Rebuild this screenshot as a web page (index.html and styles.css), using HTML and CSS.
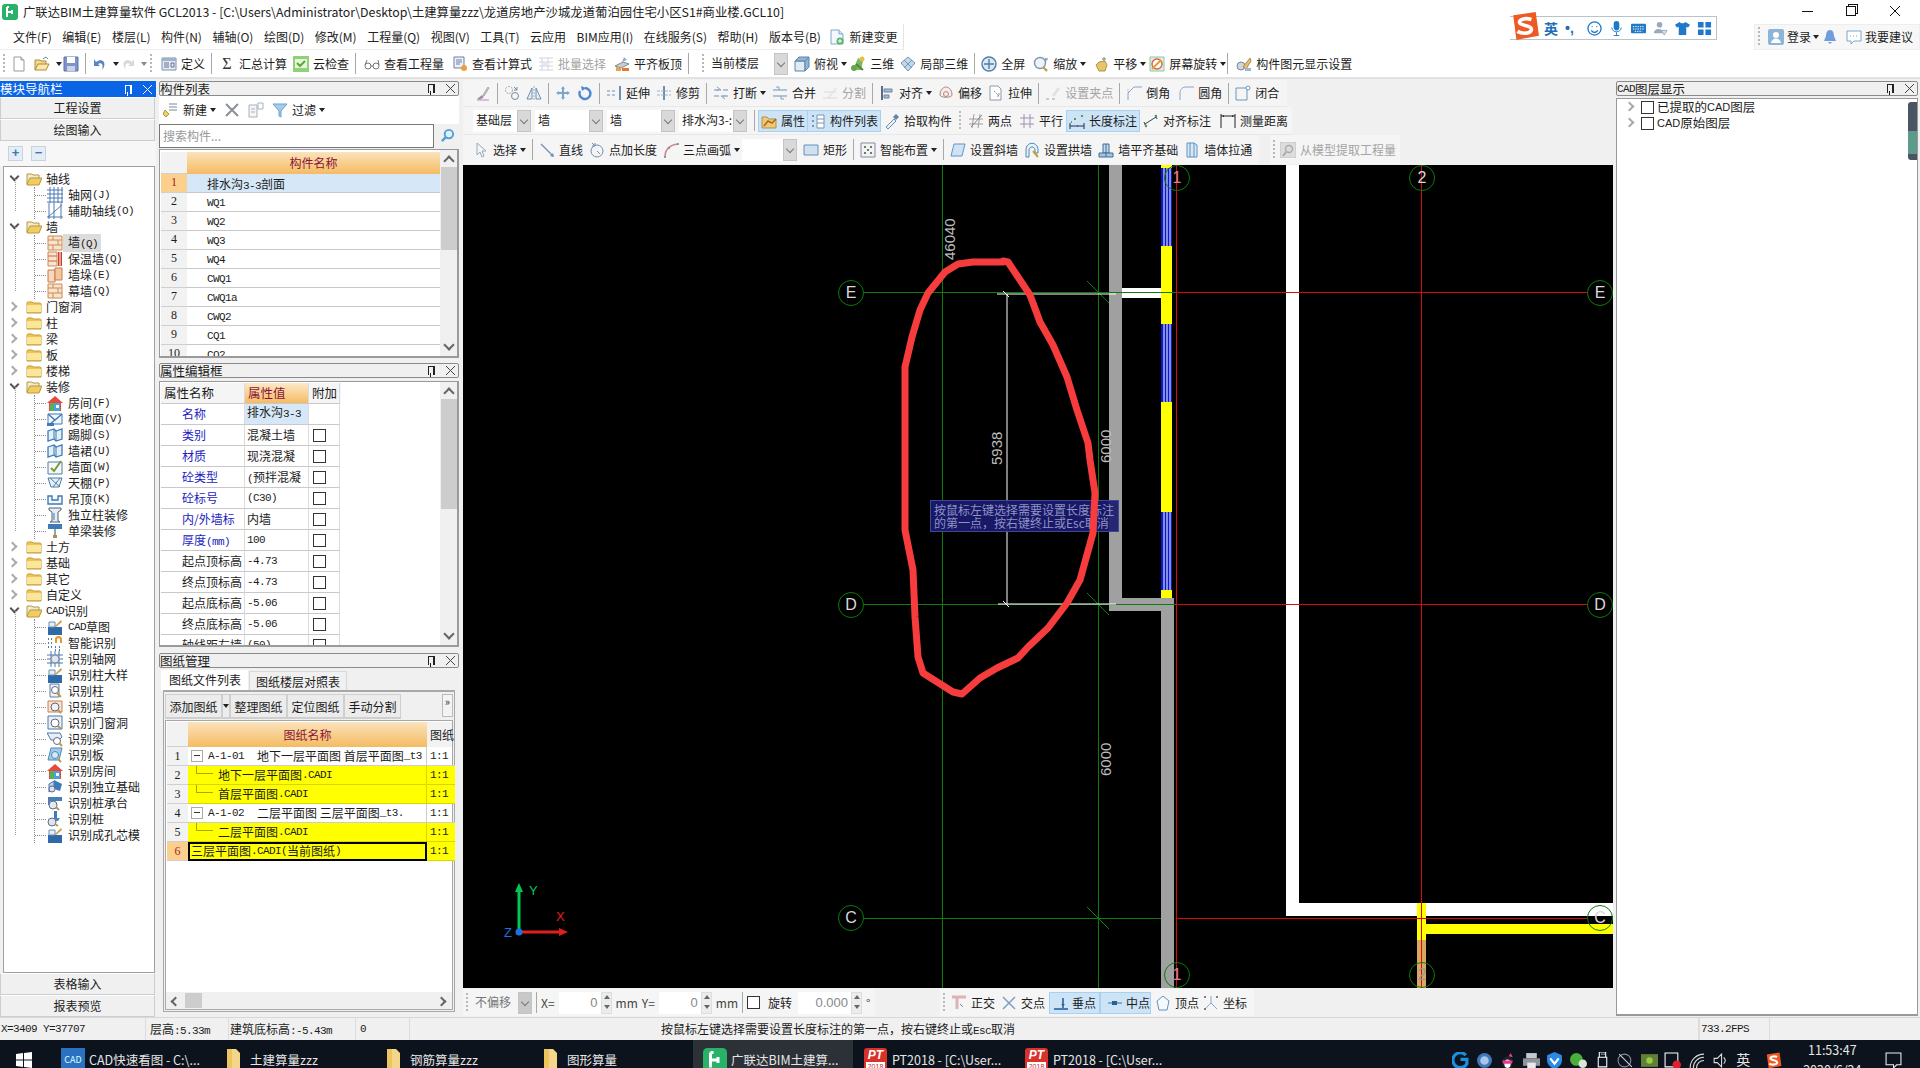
FILE: index.html
```html
<!DOCTYPE html>
<html lang="zh"><head><meta charset="utf-8"><title>GCL2013</title><link rel="stylesheet" href="styles.css"></head>
<body>
<svg class="defs" width="0" height="0">
<symbol id="doc" viewBox="0 0 16 16"><path d="M3 1h7l3 3v11H3z" fill="#fff" stroke="#999"/><path d="M10 1v3h3" fill="#ddd" stroke="#999"/></symbol>
<symbol id="open" viewBox="0 0 16 16"><path d="M1 14V4h5l1 1h5v3" fill="#f3d98a" stroke="#b08a3a"/><path d="M1 14l3-6h11l-3 6z" fill="#fbe9a8" stroke="#b08a3a"/><path d="M9 3l3-2 2 2" fill="none" stroke="#68a"/></symbol>
<symbol id="save" viewBox="0 0 16 16"><path d="M1 1h14v14H1z" fill="#7d93c9" stroke="#5d72a8"/><path d="M4 1h8v6H4z" fill="#fff"/><path d="M4 10h8v5H4z" fill="#c9d2e6"/></symbol>
<symbol id="undo" viewBox="0 0 16 16"><path d="M4 6c5-4 10-1 8 5l-2 3c2-6-1-8-4-6l2 2H2V3z" fill="#5b84c4"/></symbol>
<symbol id="redo" viewBox="0 0 16 16"><path d="M12 6C7 2 2 5 4 11l2 3C4 8 7 6 10 8L8 10h6V3z" fill="#d5d8dc"/></symbol>
<symbol id="define" viewBox="0 0 16 16"><path d="M1 2h14v12H1z" fill="#e4ebf5" stroke="#7d8ea8"/><path d="M1 2h14v3H1z" fill="#9fb2cd"/><path d="M3 7h5M3 9h5M3 11h5M10 7h3v4h-3z" fill="none" stroke="#60738f"/></symbol>
<symbol id="cloud" viewBox="0 0 16 16"><path d="M0 0h16v16H0z" fill="#8fd07a"/><path d="M2 3h12v9H2z" fill="#e8f6d8"/><path d="M4 7l3 3 5-5" fill="none" stroke="#58a83c" stroke-width="2"/></symbol>
<symbol id="glasses" viewBox="0 0 16 16"><circle cx="4" cy="10" r="3" fill="none" stroke="#777"/><circle cx="12" cy="10" r="3" fill="none" stroke="#777"/><path d="M7 10h2M1 9l2-5M15 9l-1-5" stroke="#777" fill="none"/></symbol>
<symbol id="calc" viewBox="0 0 16 16"><path d="M2 1h10v11H2z" fill="#eef2f8" stroke="#6a7fa8"/><path d="M4 4h6M4 6h6M4 8h4" stroke="#6a7fa8"/><circle cx="12" cy="12" r="3" fill="#e8a040"/></symbol>
<symbol id="newdoc" viewBox="0 0 16 16"><path d="M2 1h8l4 4v10H2z" fill="#f4f8fc" stroke="#7fa6cc"/><path d="M10 1v4h4" fill="#d6e6f4" stroke="#7fa6cc"/><circle cx="11" cy="12" r="3.500" fill="#58b868"/><path d="M11 10v4M9 12h4" stroke="#fff"/></symbol>
<symbol id="batch" viewBox="0 0 16 16"><path d="M1 2h14M1 6h14M1 10h14M1 14h14M4 2v12M10 2v12" stroke="#d0d4da" fill="none"/><path d="M4 6h6v4H4z" fill="#e4e8ee"/></symbol>
<symbol id="flush" viewBox="0 0 16 16"><path d="M1 10l8-4 6 2-8 4z" fill="#c9cdd3" stroke="#888"/><path d="M8 12h7v3H8z" fill="#e47a2e"/><path d="M2 11v4h5v-3z" fill="#eaa050"/><path d="M10 1l3 3-5 2z" fill="#8bb0d8"/></symbol>
<symbol id="topv" viewBox="0 0 16 16"><path d="M1 5h10v10H1z" fill="#e2ebf4" stroke="#5b84a8"/><path d="M1 5l4-4h10l-4 4zM11 5l4-4v10l-4 4z" fill="#8fb6d8" stroke="#5b84a8"/></symbol>
<symbol id="v3d" viewBox="0 0 16 16"><path d="M3 14l5-12 5 3-2 9z" fill="#7cb860"/><circle cx="12" cy="3" r="2.500" fill="#e8c040"/><circle cx="4" cy="12" r="3" fill="#6aa64e"/><path d="M6 8l7 6" stroke="#4d8a38" stroke-width="2"/></symbol>
<symbol id="loc3d" viewBox="0 0 16 16"><path d="M8 1l7 6-7 8-7-8z" fill="#c5d8ea" stroke="#7594b2"/><path d="M4 4l8 8M12 4l-8 8" stroke="#7594b2"/></symbol>
<symbol id="full" viewBox="0 0 16 16"><circle cx="8" cy="8" r="7" fill="#dce8f4" stroke="#4f7cac" stroke-width="1.400"/><path d="M8 3v10M3 8h10" stroke="#4f7cac" stroke-width="1.400"/></symbol>
<symbol id="zoom" viewBox="0 0 16 16"><circle cx="7" cy="7" r="5.500" fill="#eef3f8" stroke="#7b95b2" stroke-width="1.400"/><path d="M10 11l4 4" stroke="#c0a14a" stroke-width="2.400"/><path d="M13 2v3M12 3h3" stroke="#789"/></symbol>
<symbol id="pan" viewBox="0 0 16 16"><path d="M3 9l3-3 6-1 2 4-2 6H6z" fill="#e6c36c" stroke="#b3924a"/><path d="M11 1v4M9 3h4" stroke="#789"/></symbol>
<symbol id="rot" viewBox="0 0 16 16"><path d="M1 1h14v14H1z" fill="#dff0dc" stroke="#8cc7a0"/><circle cx="8" cy="8" r="5" fill="#fff" stroke="#e15a5a" stroke-width="1.400"/><path d="M3 13l9-9" stroke="#e0a030" stroke-width="2"/></symbol>
<symbol id="disp" viewBox="0 0 16 16"><circle cx="5" cy="10" r="4" fill="#cfd6dd" stroke="#7a8794"/><path d="M7 11l7-9 1 3-5 8z" fill="#e4c272" stroke="#a98c46"/><path d="M9 12h6v3H9z" fill="#9db8d2"/></symbol>
<symbol id="brush" viewBox="0 0 16 16"><path d="M2 14l5-4 2 2-4 3z" fill="#9a8fa8"/><path d="M8 10l5-8 1 1-5 8z" fill="#c5ccd4" stroke="#aaa"/><path d="M2 15h12" stroke="#d0a8c8" stroke-width="1.500"/></symbol>
<symbol id="copyc" viewBox="0 0 16 16"><circle cx="5" cy="5" r="3.500" fill="none" stroke="#9aa" stroke-dasharray="2 1"/><circle cx="11" cy="11" r="3.500" fill="none" stroke="#789"/><path d="M10 2l3 3M13 2v3h-3" stroke="#789" fill="none"/></symbol>
<symbol id="mirror" viewBox="0 0 16 16"><path d="M8 1v14" stroke="#9ab" stroke-dasharray="2 1"/><path d="M6 3v11H1zM10 3v11h5z" fill="#e8eef5" stroke="#6f8fb0"/></symbol>
<symbol id="move" viewBox="0 0 16 16"><path d="M8 1l2 3H9v3h3V6l3 2-3 2V9H9v3h1l-2 3-2-3h1V9H4v1L1 8l3-2v1h3V4H6z" fill="#7ea4cc"/></symbol>
<symbol id="rotate" viewBox="0 0 16 16"><path d="M8 3a5.500 5.500 0 1 1-5 3" fill="none" stroke="#4f8ad0" stroke-width="2.500"/><path d="M4 1l5 2-4 3z" fill="#4f8ad0"/></symbol>
<symbol id="extend" viewBox="0 0 16 16"><path d="M14 1v14" stroke="#6f8fb0" stroke-width="2"/><path d="M1 6h3M6 6h3M1 10h3M6 10h3" stroke="#6f8fb0"/></symbol>
<symbol id="trim" viewBox="0 0 16 16"><path d="M8 1v14" stroke="#6f8fb0" stroke-width="2"/><path d="M1 6h14M1 10h14" stroke="#9eb5cc" stroke-dasharray="3 1"/></symbol>
<symbol id="brk" viewBox="0 0 16 16"><path d="M1 5h5M10 5h5M1 11h5M10 11h5" stroke="#6f8fb0"/><path d="M4 2l4 3-4 0M12 14l-4-3 4 0" stroke="#7fa1c4" fill="none"/></symbol>
<symbol id="mrg" viewBox="0 0 16 16"><path d="M1 5h14M1 11h14" stroke="#6f8fb0"/><path d="M4 2h3v3M12 14H9v-3" stroke="#7fa1c4" fill="none"/></symbol>
<symbol id="spl" viewBox="0 0 16 16"><path d="M1 13h14M2 7h12" stroke="#d5d8dc"/><path d="M4 14L13 3l2 1-9 10z" fill="#e3e5e8"/></symbol>
<symbol id="alg" viewBox="0 0 16 16"><path d="M3 1v14" stroke="#596e86" stroke-width="2"/><path d="M5 4h8v3H5zM5 10h5v3H5z" fill="#a9bed3" stroke="#6a84a0"/></symbol>
<symbol id="ofs" viewBox="0 0 16 16"><path d="M2 10c0-6 4-8 6-8s6 2 6 8c0 3-12 3-12 0z" fill="#fbeae8" stroke="#aa8a8a"/><circle cx="8" cy="9" r="2.500" fill="none" stroke="#aa8a8a"/></symbol>
<symbol id="str" viewBox="0 0 16 16"><path d="M2 1h8l3 3v11H2z" fill="#fff" stroke="#8a98a8"/><path d="M6 6l5 5M11 8v3H8" stroke="#8a98a8" fill="none" stroke-dasharray="2 1"/></symbol>
<symbol id="grp" viewBox="0 0 16 16"><path d="M7 10l6-8 2 2-6 8z" fill="#dfe2e6"/><path d="M1 14h3M7 14h3" stroke="#ccc" stroke-width="2"/></symbol>
<symbol id="chf" viewBox="0 0 16 16"><path d="M2 15V8l6-6h8" fill="none" stroke="#86a6c6"/><path d="M2 4v3" stroke="#86a6c6" stroke-dasharray="1 1"/></symbol>
<symbol id="fil" viewBox="0 0 16 16"><path d="M2 15V8c0-4 3-6 6-6h8" fill="none" stroke="#86a6c6"/></symbol>
<symbol id="cls" viewBox="0 0 16 16"><path d="M1 3h11v12H1z" fill="none" stroke="#6f96bc"/><circle cx="13" cy="3" r="2" fill="#fff" stroke="#6f96bc"/></symbol>
<symbol id="attr" viewBox="0 0 16 16"><path d="M1 4h5l2 2h7v9H1z" fill="#eec877" stroke="#b3904a"/><path d="M3 13l4-5 4 2 4-4" fill="none" stroke="#a86a20" stroke-width="1.500"/></symbol>
<symbol id="lst" viewBox="0 0 16 16"><path d="M2 2h2v2H2zM2 7h2v2H2zM2 12h2v2H2z" fill="#7b96b3"/><path d="M7 2h7v13H7z" fill="#fff" stroke="#7b96b3"/><path d="M7 6h7M7 10h7" stroke="#7b96b3"/></symbol>
<symbol id="pick" viewBox="0 0 16 16"><path d="M2 14l8-8 2 2-8 8z" fill="#e9f1f8" stroke="#6d90b2"/><path d="M9 4l3-3 3 3-3 3z" fill="#5d85aa"/></symbol>
<symbol id="two" viewBox="0 0 16 16"><path d="M1 11h14M1 6h14M4 15L6 1M10 15l2-14" stroke="#a99" fill="none"/><path d="M3 14L14 2" stroke="#789"/></symbol>
<symbol id="par" viewBox="0 0 16 16"><path d="M1 5h14M1 11h14M5 1v14M11 1v14" stroke="#a08fb0" fill="none"/></symbol>
<symbol id="lend" viewBox="0 0 16 16"><path d="M1 13h14M1 10v6M15 10v6" stroke="#234" fill="none"/><path d="M5 5h2v2H5zM12 2h2v2h-2z" fill="#5a9a4c"/><path d="M2 9h1M8 13h1" stroke="#234"/></symbol>
<symbol id="algd" viewBox="0 0 16 16"><path d="M2 11L13 4M1 9l2 5M12 2l2 4" stroke="#345" fill="none"/><circle cx="3" cy="13" r="1.200" fill="#5a9a4c"/><circle cx="13" cy="3" r="1.200" fill="#5a9a4c"/></symbol>
<symbol id="meas" viewBox="0 0 16 16"><path d="M1 1v14M15 1v14M1 3h14" stroke="#222" fill="none"/><path d="M2 3l2-1v2zM14 3l-2-1v2z" fill="#222"/></symbol>
<symbol id="sel" viewBox="0 0 16 16"><path d="M4 1v12l3-3 2 5 2-1-2-5h4z" fill="#f4f6f8" stroke="#9aa8b6"/></symbol>
<symbol id="lin" viewBox="0 0 16 16"><path d="M2 2l12 12" stroke="#6f8fb0" stroke-width="1.200"/><path d="M15 15l-4-1 3-3z" fill="#6f8fb0"/></symbol>
<symbol id="ptl" viewBox="0 0 16 16"><circle cx="8" cy="9" r="6" fill="none" stroke="#6f8fb0"/><path d="M3 1l3 3M6 1v3H3M8 9l3 3" stroke="#6f8fb0" fill="none"/></symbol>
<symbol id="arc" viewBox="0 0 16 16"><path d="M2 15C2 7 7 3 15 2" fill="none" stroke="#c88" stroke-width="1.500"/><circle cx="2" cy="15" r="1" fill="#789"/><circle cx="6" cy="6" r="1" fill="#789"/><circle cx="15" cy="2" r="1" fill="#789"/></symbol>
<symbol id="rct" viewBox="0 0 16 16"><path d="M1 3h14v10H1z" fill="#cfe0f2" stroke="#6a8fb8"/></symbol>
<symbol id="smt" viewBox="0 0 16 16"><path d="M1 1h14v14H1z" fill="#f0f2f5" stroke="#889"/><path d="M4 4h2v2H4zM10 4h2v2h-2zM7 7h2v2H7zM4 10h2v2H4zM10 10h2v2h-2z" fill="#6a7f5a"/></symbol>
<symbol id="sla" viewBox="0 0 16 16"><path d="M4 2h11l-3 12H1z" fill="#cfe3f5" stroke="#5c96cc"/></symbol>
<symbol id="ach" viewBox="0 0 16 16"><path d="M2 8c0-9 12-9 12 0v3h-3V8c0-4-6-4-6 0v7H2z" fill="#e8f2f8" stroke="#4e88b6"/><path d="M9 9l5 6" stroke="#c0a040" stroke-width="2"/></symbol>
<symbol id="wfl" viewBox="0 0 16 16"><path d="M5 2h6v9H5z" fill="#c9d9ea" stroke="#3d6c9c"/><path d="M1 11h14v4H1z" fill="#a8c3dd" stroke="#3d6c9c"/><path d="M8 2v13" stroke="#3d6c9c"/></symbol>
<symbol id="wth" viewBox="0 0 16 16"><path d="M3 1h7l3 2v12H3z" fill="#d8e8f5" stroke="#5f94c2"/><path d="M6 1v14M10 1v14" stroke="#5f94c2"/></symbol>
<symbol id="ext" viewBox="0 0 16 16"><path d="M0 0h16v16H0z" fill="#dcdcdc" stroke="#c4c4c4"/><circle cx="9" cy="7" r="3.500" fill="none" stroke="#aaa" stroke-width="1.400"/><path d="M6 10l-3 4" stroke="#aaa" stroke-width="2"/></symbol>
<symbol id="ort" viewBox="0 0 16 16"><path d="M1 2h14M6 2v12" stroke="#dcb4b4" stroke-width="3"/><path d="M9 9l3 3" stroke="#789"/></symbol>
<symbol id="ins" viewBox="0 0 16 16"><path d="M2 2l12 12M14 2L2 14" stroke="#7da0c4" stroke-width="1.500"/></symbol>
<symbol id="prp" viewBox="0 0 16 16"><path d="M1 14h14" stroke="#2a5f9e" stroke-width="1.600"/><path d="M10 3v10" stroke="#2a5f9e" stroke-width="1.600"/><path d="M10 11l-2-2h4z" fill="#2a5f9e"/></symbol>
<symbol id="mid" viewBox="0 0 16 16"><path d="M1 8h14" stroke="#3a6ea5"/><path d="M5 6h5v4H5z" fill="#2a5f9e"/></symbol>
<symbol id="vtx" viewBox="0 0 16 16"><path d="M8 1l6 5-2 9H4L2 6z" fill="#f6fafd" stroke="#5e93c2"/></symbol>
<symbol id="coo" viewBox="0 0 16 16"><path d="M8 8V1M8 8l6 6M8 8l-6 6" stroke="#85a8c9" fill="none"/><circle cx="2" cy="2" r="1" fill="#556"/><circle cx="14" cy="2" r="1" fill="#556"/><circle cx="2" cy="14" r="1" fill="#556"/></symbol>
<symbol id="newb" viewBox="0 0 16 16"><path d="M6 2h8M6 5h8M6 8h8" stroke="#7a8797"/><path d="M2 8l4 4-3 3-3-3z" fill="#e8d068" stroke="#b09a38"/></symbol>
<symbol id="del" viewBox="0 0 16 16"><path d="M2 2l12 12M14 2L2 14" stroke="#8a8f96" stroke-width="2"/></symbol>
<symbol id="copyb" viewBox="0 0 16 16"><path d="M1 3h8v12H1z" fill="#f3f5f7" stroke="#a7b1ba"/><path d="M10 1h5v6h-5z" fill="#fff" stroke="#a7b1ba"/><path d="M3 7h4M3 10h4" stroke="#a7b1ba"/></symbol>
<symbol id="filter" viewBox="0 0 16 16"><path d="M1 2h14L9 9v6l-2-1V9z" fill="#a5cceb" stroke="#6aa2cc"/></symbol>
<symbol id="fold" viewBox="0 0 16 16"><path d="M1 4c0-1 1-1 1-1h4l1 1h7c1 0 1 1 1 1v9H1z" fill="#f3c64a" stroke="#c09a3a"/><path d="M1 6h14v7H1z" fill="#fbe79c"/></symbol>
<symbol id="foldo" viewBox="0 0 16 16"><path d="M1 13V3h5l1 1h6v3" fill="#f5eac7" stroke="#b59648"/><path d="M1 13l3-6h12l-3 7H1z" fill="#f3cc5e" stroke="#b59648"/></symbol>
<symbol id="tgrid" viewBox="0 0 16 16"><path d="M0 3h16M0 7h16M0 11h16M0 15h16M3 0v16M7 0v16M11 0v16M15 0v16" stroke="#4b78b4"/></symbol>
<symbol id="taux" viewBox="0 0 16 16"><path d="M0 14h16M2 0v16M7 0v16M14 0v16" stroke="#4b78b4"/><path d="M1 14L15 2" stroke="#4b78b4"/></symbol>
<symbol id="twall" viewBox="0 0 16 16"><path d="M1 1h14v14H1z" fill="#f8e3cf" stroke="#cd8a55"/><path d="M1 5h14M1 10h14M6 1v4M11 5v5M6 10v5" stroke="#cd8a55"/></symbol>
<symbol id="tins" viewBox="0 0 16 16"><path d="M1 1h9v14H1z" fill="#f8e3cf" stroke="#cd8a55"/><path d="M1 5h9M1 10h9" stroke="#c86a3a"/><path d="M11 1h4v14h-4z" fill="#c9402a"/><path d="M13 1v14" stroke="#fff"/></symbol>
<symbol id="tpier" viewBox="0 0 16 16"><path d="M1 3h7v12H1z" fill="#f7d8bc" stroke="#c87a45"/><path d="M8 1h7v12H8z" fill="#f3c79c" stroke="#c87a45"/></symbol>
<symbol id="troom" viewBox="0 0 16 16"><path d="M8 1L0 8h2v8h12V8h2z" fill="#e9473b"/><path d="M3 8h10v8H3z" fill="#48a2e0"/><path d="M3 8h4v8H3z" fill="#58b158"/><path d="M9 10h3v3H9z" fill="#fff"/></symbol>
<symbol id="tfloor" viewBox="0 0 16 16"><path d="M1 3h14v10H1z" fill="#f3f7fb" stroke="#3e79b8"/><path d="M1 3l7 6 7-6M3 13l5-4" fill="none" stroke="#3e79b8" stroke-width="1.400"/><path d="M0 12h7v3H0z" fill="#3e79b8"/></symbol>
<symbol id="tbase" viewBox="0 0 16 16"><path d="M1 4l6-2 2 2 6-2v10l-6 2-2-2-6 2z" fill="#e3eff9" stroke="#3e79b8" stroke-width="1.300"/><path d="M7 2v10M9 4v10" stroke="#3e79b8"/></symbol>
<symbol id="tface" viewBox="0 0 16 16"><path d="M1 3h14v12H1z" fill="#f5f8fb" stroke="#4f7ca6"/><path d="M4 9l3 3 7-10" stroke="#7a9a3a" stroke-width="2" fill="none"/></symbol>
<symbol id="tceil" viewBox="0 0 16 16"><path d="M1 3h14l-3 9H4z" fill="#e6f0f9" stroke="#4f7ca6"/><path d="M3 3l10 9M13 3L6 12" stroke="#4f7ca6"/></symbol>
<symbol id="tsus" viewBox="0 0 16 16"><path d="M1 5v8h14V5h-4v4H5V5z" fill="#f3f7fb" stroke="#3e79b8" stroke-width="1.400"/></symbol>
<symbol id="tcol" viewBox="0 0 16 16"><path d="M2 1h12v2l-3 2v9l2 1H3l2-1V5L2 3z" fill="#e7edf3" stroke="#4f6578"/><path d="M7 6v7" stroke="#3e79b8"/></symbol>
<symbol id="tbeam" viewBox="0 0 16 16"><path d="M1 1h14v5H1z" fill="#3e79b8"/><path d="M7 6h2v6H7z" fill="#8aa"/><path d="M6 12h4v3H6z" fill="#b58a50"/></symbol>
<symbol id="tcad" viewBox="0 0 16 16"><path d="M1 8h14v8H1z" fill="#2f6aa8"/><path d="M8 7l6-6 1 2-6 5z" fill="#cfa04a"/><path d="M2 3h6v5H2z" fill="#e6edf4" stroke="#6a8fb2"/></symbol>
<symbol id="tsm" viewBox="0 0 16 16"><path d="M1 4h1M4 4h1M1 8h1M4 8h1M1 12h1M4 12h1M8 12h1M12 12h1M8 15h1M12 15h1" stroke="#4f7ca6" stroke-width="2"/><path d="M8 8V4c0-4 7-4 7 0v4h-2V4c0-1-3-1-3 0v4z" fill="#e8962a"/></symbol>
<symbol id="tgg" viewBox="0 0 16 16"><path d="M0 4h16M0 8h16M0 12h16M4 0v16M8 0v16M12 0v16" stroke="#4b78b4"/><circle cx="8" cy="8" r="4" fill="#dfe8f0" stroke="#889"/></symbol>
<symbol id="tr1" viewBox="0 0 16 16"><path d="M3 1h9v13H3z" fill="#eef3f8" stroke="#5d7ea0"/><circle cx="8" cy="7" r="3.500" fill="#fff" stroke="#668"/><path d="M10 10l4 4" stroke="#b89a4a" stroke-width="2"/></symbol>
<symbol id="tr2" viewBox="0 0 16 16"><path d="M1 2h14v11H1z" fill="#f7e4d0" stroke="#c8824c"/><circle cx="8" cy="8" r="4" fill="#eef3f8" stroke="#668"/><path d="M11 11l3 3" stroke="#b89a4a" stroke-width="2"/></symbol>
<symbol id="tr3" viewBox="0 0 16 16"><path d="M1 1h14v13H1z" fill="#eaf1f8" stroke="#4a78a8"/><circle cx="8" cy="8" r="4" fill="#fff" stroke="#668"/><path d="M11 11l3 3" stroke="#b89a4a" stroke-width="2"/></symbol>
<symbol id="tr4" viewBox="0 0 16 16"><path d="M0 2h13l2 4-3 3H4z" fill="#e6eef6" stroke="#4a78a8"/><circle cx="10" cy="10" r="3.500" fill="#fff" stroke="#668"/><path d="M12 12l3 3" stroke="#b89a4a" stroke-width="2"/></symbol>
<symbol id="tr5" viewBox="0 0 16 16"><path d="M4 1h11l-3 12H1z" fill="#a6cbe8" stroke="#4a88b8"/><circle cx="8" cy="8" r="3.500" fill="#d4eaf6" stroke="#4a88b8"/><path d="M11 12l3 3" stroke="#b89a4a" stroke-width="2"/></symbol>
<symbol id="tr6" viewBox="0 0 16 16"><path d="M7 1l8 4-2 7-6-2z" fill="#3e79b8"/><path d="M2 5l5-3v8l-5 3z" fill="#b7d1e8" stroke="#3e79b8"/><circle cx="5" cy="10" r="3" fill="#d8e2ec" stroke="#668"/></symbol>
<symbol id="tr7" viewBox="0 0 16 16"><path d="M1 2h14v4H3v4H1z" fill="#4a7fb5"/><circle cx="6" cy="10" r="4" fill="#e1e9f1" stroke="#668"/><path d="M9 12l3 3" stroke="#b89a4a" stroke-width="2"/></symbol>
<symbol id="tr8" viewBox="0 0 16 16"><path d="M7 0h3v8H7z" fill="#3e79b8"/><path d="M4 7h9l-2 3H6z" fill="#4a88c0"/><circle cx="5" cy="11" r="4" fill="#dbe5ee" stroke="#668"/><path d="M8 13l3 2" stroke="#b89a4a" stroke-width="2"/></symbol>
<symbol id="glodon" viewBox="0 0 16 16"><rect width="16" height="16" rx="3" fill="#27b268"/><path d="M5 3v10M5 8h6M5 3h2M10 6v4" stroke="#fff" stroke-width="2" fill="none"/></symbol>
<symbol id="user" viewBox="0 0 16 16"><rect width="16" height="16" rx="2" fill="#8cb5d8"/><circle cx="8" cy="6" r="3" fill="#fff"/><path d="M3 14c1-6 9-6 10 0z" fill="#fff"/></symbol>
<symbol id="bell" viewBox="0 0 16 16"><path d="M8 1c3 0 4 3 4 6l2 5H2l2-5c0-3 1-6 4-6z" fill="#6f9edb"/><path d="M6 13h4l-2 2z" fill="#6f9edb"/></symbol>
<symbol id="chat" viewBox="0 0 16 16"><path d="M1 2h14v10H8l-3 3v-3H1z" fill="#fff" stroke="#7ea6cc"/><path d="M4 7h1M7 7h1M10 7h1" stroke="#7ea6cc"/></symbol>
<symbol id="sogou" viewBox="0 0 28 28"><path d="M3 4l21-3 3 22-21 4z" fill="#ef5a24"/><path d="M20 8C14 6 8 8 9 11s11 2 11 6-8 5-13 2" fill="none" stroke="#fff" stroke-width="3.400"/></symbol>
<symbol id="tfolder" viewBox="0 0 16 24"><path d="M2 1h9l4 4v19H2z" fill="#f4d68a"/><path d="M2 1h5v23H2z" fill="#eec45e"/></symbol>
</svg>

<div class="app">
  <header class="titlebar">
    <svg class="logo"><use href="#glodon"/></svg>
    <span class="ttl">广联达BIM土建算量软件 GCL2013 - [C:\Users\Administrator\Desktop\土建算量zzz\龙道房地产沙城龙道葡泊园住宅小区S1#商业楼.GCL10]</span>
    <div class="win">
      <span class="wmin"></span><span class="wres"></span>
      <svg class="wx" viewBox="0 0 12 12"><path d="M1 1l10 10M11 1L1 11" stroke="#111" fill="none"/></svg>
    </div>
  </header>

  <nav class="menubar">
    <div class="menus">
      <span>文件(F)</span><span>编辑(E)</span><span>楼层(L)</span><span>构件(N)</span><span>辅轴(O)</span><span>绘图(D)</span><span>修改(M)</span><span>工程量(Q)</span><span>视图(V)</span><span>工具(T)</span><span>云应用</span><span>BIM应用(I)</span><span>在线服务(S)</span><span>帮助(H)</span><span>版本号(B)</span>
      <span class="it nb"><svg class="ic"><use href="#newdoc"/></svg>新建变更</span>
    </div>
    <div class="login">
      <i class="grip"></i>
      <svg class="ic"><use href="#user"/></svg><span>登录</span><i class="ar"></i>
      <svg class="ic"><use href="#bell"/></svg><svg class="ic ch"><use href="#chat"/></svg><span>我要建议</span>
    </div>
  </nav>

  <div class="ime">
    <svg class="sg"><use href="#sogou"/></svg>
    <b>英</b><b class="dot">•,</b>
    <svg class="ic2 smile" viewBox="0 0 16 16"><circle cx="8" cy="8" r="7" fill="none" stroke="#1f78c8" stroke-width="1.400"/><path d="M5 6h1M10 6h1M4.500 10c2 3 5 3 7 0" stroke="#1f78c8" stroke-width="1.400" fill="none"/></svg>
    <svg class="ic2" viewBox="0 0 16 16"><rect x="5" y="0" width="6" height="10" rx="3" fill="#1f78c8"/><path d="M3 7c0 6 10 6 10 0M8 12v4M5 15.500h6" stroke="#1f78c8" fill="none"/></svg>
    <svg class="ic2" viewBox="0 0 16 16"><rect y="3" width="16" height="10" rx="1" fill="#1f78c8"/><path d="M2 6h12M2 8.500h12M4 11h8" stroke="#fff" stroke-dasharray="1.500 1"/></svg>
    <svg class="ic2" viewBox="0 0 16 16"><circle cx="7" cy="4" r="3" fill="#9ab"/><path d="M1 13c0-6 10-6 10 0z" fill="#9ab"/><path d="M9 10h6l-3 5z" fill="#dde" stroke="#9ab"/></svg>
    <svg class="ic2" viewBox="0 0 16 16"><path d="M5 1L0 4l2 3 2-1v9h8V6l2 1 2-3-5-3c-1 2-5 2-6 0z" fill="#1f78c8"/></svg>
    <svg class="ic2" viewBox="0 0 16 16"><path d="M1 1h6v6H1zM9 1h6v6H9zM1 9h6v6H1zM9 9h6v6H9z" fill="#1f78c8"/></svg>
  </div>

  <div class="tb tb1">
    <i class="grip"></i>
    <svg class="ic"><use href="#doc"/></svg>
    <svg class="ic w2"><use href="#open"/></svg><i class="ar"></i>
    <svg class="ic"><use href="#save"/></svg><i class="sep"></i>
    <svg class="ic"><use href="#undo"/></svg><i class="ar"></i>
    <svg class="ic"><use href="#redo"/></svg><i class="ar lt"></i><i class="grip gr3"></i>
    <span class="it"><svg class="ic"><use href="#define"/></svg>定义</span><i class="sep"></i>
    <span class="it"><span class="sig">Σ</span>汇总计算</span>
    <span class="it"><svg class="ic"><use href="#cloud"/></svg>云检查</span><i class="sep"></i>
    <span class="it ml2"><svg class="ic"><use href="#glasses"/></svg>查看工程量</span>
    <span class="it ml2"><svg class="ic"><use href="#calc"/></svg>查看计算式</span>
    <span class="it dis"><svg class="ic"><use href="#batch"/></svg>批量选择</span>
    <span class="it ml2"><svg class="ic"><use href="#flush"/></svg>平齐板顶</span><i class="sep"></i>
    <i class="gap16"></i><i class="grip gr-2"></i>
    <div class="cb cb-floor"><span>当前楼层</span><i></i></div>
    <span class="it"><svg class="ic"><use href="#topv"/></svg>俯视<i class="ar"></i></span>
    <span class="it ml2"><svg class="ic"><use href="#v3d"/></svg>三维</span>
    <span class="it"><svg class="ic"><use href="#loc3d"/></svg>局部三维</span><i class="sep"></i>
    <span class="it"><svg class="ic"><use href="#full"/></svg>全屏</span>
    <span class="it ml2"><svg class="ic"><use href="#zoom"/></svg>缩放<i class="ar"></i></span>
    <span class="it ml6"><svg class="ic"><use href="#pan"/></svg>平移<i class="ar"></i></span>
    <span class="it ml2"><svg class="ic"><use href="#rot"/></svg>屏幕旋转<i class="ar"></i></span><i class="sep"></i>
    <span class="it ml2"><svg class="ic"><use href="#disp"/></svg>构件图元显示设置</span>
  </div>

  <main class="work">
    <aside class="nav">
      <div class="ptitle act"><span>模块导航栏</span><span class="pin"></span><span class="cx"></span></div>
      <div class="navbtn">工程设置</div>
      <div class="navbtn">绘图输入</div>
      <div class="navtool"><span class="pm">+</span><span class="pm">−</span></div>
      <div class="tree">
        <div class="tr"><i class="tw o"></i><svg class="ic"><use href="#foldo"/></svg>轴线</div>
        <div class="tg">
          <div class="tr"><svg class="ic"><use href="#tgrid"/></svg>轴网<span class="m">(J)</span></div>
          <div class="tr"><svg class="ic"><use href="#taux"/></svg>辅助轴线<span class="m">(O)</span></div>
        </div>
        <div class="tr"><i class="tw o"></i><svg class="ic"><use href="#foldo"/></svg>墙</div>
        <div class="tg">
          <div class="tr hl"><svg class="ic"><use href="#twall"/></svg><span class="lab">墙<span class="m">(Q)</span></span></div>
          <div class="tr"><svg class="ic"><use href="#tins"/></svg>保温墙<span class="m">(Q)</span></div>
          <div class="tr"><svg class="ic"><use href="#tpier"/></svg>墙垛<span class="m">(E)</span></div>
          <div class="tr"><svg class="ic"><use href="#twall"/></svg>幕墙<span class="m">(Q)</span></div>
        </div>
        <div class="tr"><i class="tw"></i><svg class="ic"><use href="#fold"/></svg>门窗洞</div>
        <div class="tr"><i class="tw"></i><svg class="ic"><use href="#fold"/></svg>柱</div>
        <div class="tr"><i class="tw"></i><svg class="ic"><use href="#fold"/></svg>梁</div>
        <div class="tr"><i class="tw"></i><svg class="ic"><use href="#fold"/></svg>板</div>
        <div class="tr"><i class="tw"></i><svg class="ic"><use href="#fold"/></svg>楼梯</div>
        <div class="tr"><i class="tw o"></i><svg class="ic"><use href="#foldo"/></svg>装修</div>
        <div class="tg">
          <div class="tr"><svg class="ic"><use href="#troom"/></svg>房间<span class="m">(F)</span></div>
          <div class="tr"><svg class="ic"><use href="#tfloor"/></svg>楼地面<span class="m">(V)</span></div>
          <div class="tr"><svg class="ic"><use href="#tbase"/></svg>踢脚<span class="m">(S)</span></div>
          <div class="tr"><svg class="ic"><use href="#tbase"/></svg>墙裙<span class="m">(U)</span></div>
          <div class="tr"><svg class="ic"><use href="#tface"/></svg>墙面<span class="m">(W)</span></div>
          <div class="tr"><svg class="ic"><use href="#tceil"/></svg>天棚<span class="m">(P)</span></div>
          <div class="tr"><svg class="ic"><use href="#tsus"/></svg>吊顶<span class="m">(K)</span></div>
          <div class="tr"><svg class="ic"><use href="#tcol"/></svg>独立柱装修</div>
          <div class="tr"><svg class="ic"><use href="#tbeam"/></svg>单梁装修</div>
        </div>
        <div class="tr"><i class="tw"></i><svg class="ic"><use href="#fold"/></svg>土方</div>
        <div class="tr"><i class="tw"></i><svg class="ic"><use href="#fold"/></svg>基础</div>
        <div class="tr"><i class="tw"></i><svg class="ic"><use href="#fold"/></svg>其它</div>
        <div class="tr"><i class="tw"></i><svg class="ic"><use href="#fold"/></svg>自定义</div>
        <div class="tr"><i class="tw o"></i><svg class="ic"><use href="#foldo"/></svg><span class="m">CAD</span>识别</div>
        <div class="tg">
          <div class="tr"><svg class="ic"><use href="#tcad"/></svg><span class="m">CAD</span>草图</div>
          <div class="tr"><svg class="ic"><use href="#tsm"/></svg>智能识别</div>
          <div class="tr"><svg class="ic"><use href="#tgg"/></svg>识别轴网</div>
          <div class="tr"><svg class="ic"><use href="#tcad"/></svg>识别柱大样</div>
          <div class="tr"><svg class="ic"><use href="#tr1"/></svg>识别柱</div>
          <div class="tr"><svg class="ic"><use href="#tr2"/></svg>识别墙</div>
          <div class="tr"><svg class="ic"><use href="#tr3"/></svg>识别门窗洞</div>
          <div class="tr"><svg class="ic"><use href="#tr4"/></svg>识别梁</div>
          <div class="tr"><svg class="ic"><use href="#tr5"/></svg>识别板</div>
          <div class="tr"><svg class="ic"><use href="#troom"/></svg>识别房间</div>
          <div class="tr"><svg class="ic"><use href="#tr6"/></svg>识别独立基础</div>
          <div class="tr"><svg class="ic"><use href="#tr7"/></svg>识别桩承台</div>
          <div class="tr"><svg class="ic"><use href="#tr8"/></svg>识别桩</div>
          <div class="tr"><svg class="ic"><use href="#tcad"/></svg>识别成孔芯模</div>
        </div>
      </div>
      <div class="navbtn">表格输入</div>
      <div class="navbtn">报表预览</div>
    </aside>

    <section class="mid">
      <div class="panel p1">
        <div class="ptitle"><span>构件列表</span><span class="pin"></span><span class="cx"></span></div>
        <div class="ptool">
          <span class="it"><svg class="ic"><use href="#newb"/></svg>新建<i class="ar"></i></span>
          <svg class="ic"><use href="#del"/></svg>
          <svg class="ic"><use href="#copyb"/></svg>
          <span class="it"><svg class="ic"><use href="#filter"/></svg>过滤<i class="ar"></i></span>
        </div>
        <div class="search"><span class="sbox">搜索构件...</span><svg class="ic sic" viewBox="0 0 16 16"><circle cx="9.500" cy="6.500" r="4.500" fill="#dff0fb" stroke="#4d9ed6" stroke-width="2"/><path d="M6 10l-4 4" stroke="#4d9ed6" stroke-width="2.500"/></svg></div>
        <div class="gridbox g1">
          <div class="gt">
            <div class="gr gh"><span class="n"></span><span class="h">构件名称</span></div>
            <div class="gr sel"><span class="n">1</span><span class="v big">排水沟<span class="m">3-3</span>剖面</span></div>
            <div class="gr"><span class="n">2</span><span class="v m2">WQ1</span></div>
            <div class="gr"><span class="n">3</span><span class="v m2">WQ2</span></div>
            <div class="gr"><span class="n">4</span><span class="v m2">WQ3</span></div>
            <div class="gr"><span class="n">5</span><span class="v m2">WQ4</span></div>
            <div class="gr"><span class="n">6</span><span class="v m2">CWQ1</span></div>
            <div class="gr"><span class="n">7</span><span class="v m2">CWQ1a</span></div>
            <div class="gr"><span class="n">8</span><span class="v m2">CWQ2</span></div>
            <div class="gr"><span class="n">9</span><span class="v m2">CQ1</span></div>
            <div class="gr"><span class="n">10</span><span class="v m2">CQ2</span></div>
          </div>
          <div class="vs"><i class="up"></i><b class="th th1"></b><i class="dn"></i></div>
        </div>
      </div>

      <div class="panel p2">
        <div class="ptitle"><span>属性编辑框</span><span class="pin"></span><span class="cx"></span></div>
        <div class="gridbox g2">
          <div class="pt">
            <div class="pr ph"><span>属性名称</span><span class="pv">属性值</span><span>附加</span></div>
            <div class="pr"><span class="pn b">名称</span><span class="pval s">排水沟<span class="m">3-3</span></span><span class="pc"></span></div>
            <div class="pr"><span class="pn b">类别</span><span class="pval">混凝土墙</span><span class="pc"><i class="ck"></i></span></div>
            <div class="pr"><span class="pn b">材质</span><span class="pval">现浇混凝</span><span class="pc"><i class="ck"></i></span></div>
            <div class="pr"><span class="pn b">砼类型</span><span class="pval"><span class="m">(</span>预拌混凝</span><span class="pc"><i class="ck"></i></span></div>
            <div class="pr"><span class="pn b">砼标号</span><span class="pval m2">(C30)</span><span class="pc"><i class="ck"></i></span></div>
            <div class="pr"><span class="pn b">内/外墙标</span><span class="pval">内墙</span><span class="pc"><i class="ck"></i></span></div>
            <div class="pr"><span class="pn b">厚度<span class="m">(mm)</span></span><span class="pval m2">100</span><span class="pc"><i class="ck"></i></span></div>
            <div class="pr"><span class="pn">起点顶标高</span><span class="pval m2">-4.73</span><span class="pc"><i class="ck"></i></span></div>
            <div class="pr"><span class="pn">终点顶标高</span><span class="pval m2">-4.73</span><span class="pc"><i class="ck"></i></span></div>
            <div class="pr"><span class="pn">起点底标高</span><span class="pval m2">-5.06</span><span class="pc"><i class="ck"></i></span></div>
            <div class="pr"><span class="pn">终点底标高</span><span class="pval m2">-5.06</span><span class="pc"><i class="ck"></i></span></div>
            <div class="pr"><span class="pn">轴线距左墙</span><span class="pval m2">(50)</span><span class="pc"><i class="ck"></i></span></div>
          </div>
          <div class="vs"><i class="up"></i><b class="th th2"></b><i class="dn"></i></div>
        </div>
      </div>

      <div class="panel p3">
        <div class="ptitle"><span>图纸管理</span><span class="pin"></span><span class="cx"></span></div>
        <div class="tabs"><span class="tab on">图纸文件列表</span><span class="tab">图纸楼层对照表</span></div>
        <div class="tabbody">
          <div class="btns"><span class="bt w1">添加图纸</span><span class="bt dd"><i class="ar"></i></span><span class="bt">整理图纸</span><span class="bt">定位图纸</span><span class="bt">手动分割</span><span class="more">»</span></div>
          <div class="dt">
            <div class="dr dh"><span class="n"></span><span class="h">图纸名称</span><span class="r">图纸</span></div>
            <div class="dr"><span class="n">1</span><span class="d"><i class="mn"></i><span class="m">A-1-01</span><span class="ind">地下一层平面图</span>&nbsp;首层平面图<span class="m">_t3</span></span><span class="r m2">1:1</span></div>
            <div class="dr y"><span class="n">2</span><span class="d sub"><i class="br"></i>地下一层平面图<span class="m">.CADI</span></span><span class="r m2">1:1</span></div>
            <div class="dr y"><span class="n">3</span><span class="d sub"><i class="br"></i>首层平面图<span class="m">.CADI</span></span><span class="r m2">1:1</span></div>
            <div class="dr"><span class="n">4</span><span class="d"><i class="mn"></i><span class="m">A-1-02</span><span class="ind">二层平面图</span>&nbsp;三层平面图<span class="m">_t3.</span></span><span class="r m2">1:1</span></div>
            <div class="dr y"><span class="n">5</span><span class="d sub"><i class="br"></i>二层平面图<span class="m">.CADI</span></span><span class="r m2">1:1</span></div>
            <div class="dr y cur"><span class="n">6</span><span class="d edit">三层平面图<span class="m">.CADI(</span>当前图纸<span class="m">)</span></span><span class="r m2">1:1</span></div>
            <div class="hs"><i class="hl-l"></i><b></b><i class="hl-r"></i></div>
          </div>
        </div>
      </div>
    </section>

    <section class="center">
      <div class="tb rowa">
        <svg class="ic"><use href="#brush"/></svg><i class="sep"></i>
        <svg class="ic"><use href="#copyc"/></svg><svg class="ic"><use href="#mirror"/></svg><i class="sep"></i>
        <svg class="ic"><use href="#move"/></svg><svg class="ic"><use href="#rotate"/></svg><i class="sep"></i>
        <span class="it"><svg class="ic"><use href="#extend"/></svg>延伸</span>
        <span class="it"><svg class="ic"><use href="#trim"/></svg>修剪</span><i class="sep"></i>
        <span class="it"><svg class="ic"><use href="#brk"/></svg>打断<i class="ar"></i></span>
        <span class="it"><svg class="ic"><use href="#mrg"/></svg>合并</span>
        <span class="it dis"><svg class="ic"><use href="#spl"/></svg>分割</span><i class="sep"></i>
        <span class="it"><svg class="ic"><use href="#alg"/></svg>对齐<i class="ar"></i></span>
        <span class="it"><svg class="ic"><use href="#ofs"/></svg>偏移</span>
        <span class="it"><svg class="ic"><use href="#str"/></svg>拉伸</span><i class="sep"></i>
        <span class="it dis"><svg class="ic"><use href="#grp"/></svg>设置夹点</span><i class="sep"></i>
        <span class="it"><svg class="ic"><use href="#chf"/></svg>倒角</span>
        <span class="it ml2"><svg class="ic"><use href="#fil"/></svg>圆角</span><i class="sep"></i>
        <span class="it"><svg class="ic"><use href="#cls"/></svg>闭合</span>
      </div>
      <div class="tb rowb">
        <div class="cb c43"><span>基础层</span><i></i></div>
        <div class="cb c53"><span>墙</span><i></i></div>
        <div class="cb c53"><span>墙</span><i></i></div>
        <div class="cb c52"><span>排水沟3-:</span><i></i></div><i class="sep"></i>
        <span class="it on"><svg class="ic"><use href="#attr"/></svg>属性</span>
        <span class="it on"><svg class="ic"><use href="#lst"/></svg>构件列表</span>
        <span class="it"><svg class="ic"><use href="#pick"/></svg>拾取构件</span>
        <i class="grip"></i>
        <span class="it"><svg class="ic"><use href="#two"/></svg>两点</span>
        <span class="it"><svg class="ic"><use href="#par"/></svg>平行</span>
        <span class="it on"><svg class="ic"><use href="#lend"/></svg>长度标注</span>
        <span class="it"><svg class="ic"><use href="#algd"/></svg>对齐标注</span>
        <span class="it ml2"><svg class="ic"><use href="#meas"/></svg>测量距离</span>
      </div>
      <div class="rowc">
        <div class="tb tc1">
          <span class="it"><svg class="ic"><use href="#sel"/></svg>选择<i class="ar"></i></span><i class="sep"></i>
          <span class="it"><svg class="ic"><use href="#lin"/></svg>直线</span>
          <span class="it"><svg class="ic"><use href="#ptl"/></svg>点加长度</span>
          <span class="it"><svg class="ic"><use href="#arc"/></svg>三点画弧<i class="ar"></i></span>
          <div class="cb c55"><span></span><i></i></div>
          <span class="it"><svg class="ic"><use href="#rct"/></svg>矩形</span><i class="sep"></i>
          <span class="it"><svg class="ic"><use href="#smt"/></svg>智能布置<i class="ar"></i></span><i class="sep"></i>
          <span class="it"><svg class="ic"><use href="#sla"/></svg>设置斜墙</span>
          <span class="it"><svg class="ic"><use href="#ach"/></svg>设置拱墙</span>
          <span class="it"><svg class="ic"><use href="#wfl"/></svg>墙平齐基础</span>
          <span class="it"><svg class="ic"><use href="#wth"/></svg>墙体拉通</span>
        </div>
        <div class="tb tc2"><i class="grip"></i><span class="it dis"><svg class="ic"><use href="#ext"/></svg>从模型提取工程量</span></div>
      </div>

      <div class="canvas">
        <svg class="cad" viewBox="463 165 1150 823">
          <g class="gy">
            <path d="M1109 165h13v446h-13zM1109 598h65v13h-65zM1161 598h13v390h-13z"/>
          </g>
          <path class="wh" d="M1286 165h13v738h-13zM1286 903h327v13h-327zM1122 288h43v10h-43z"/>
          <path class="yl" d="M1161 165h11v3h-11zM1161 246h11v78h-11zM1161 402h11v110h-11zM1161 590h11v8h-11zM1417 903h9v37h-9zM1426 924h187v10h-187z"/>
          <g>
            <path class="bl" d="M1161 168h11v78h-11zM1161 324h11v78h-11zM1161 512h11v78h-11z"/>
            <path class="blw" d="M1164 168v78M1167 168v78M1170 168v78M1164 324v78M1167 324v78M1170 324v78M1164 512v78M1167 512v78M1170 512v78"/>
          </g>
          <path class="tan" d="M1417 940h9v48h-9z"/>
          <path class="gl" d="M942.500 165v823M1098.500 165v823M864 292.500h312M864 604.500h312M864 918.500h297M1087 281l22 22M1087 593l22 22M1087 907l22 22"/>
          <path class="rd" d="M1176.500 165v823M1421.500 165v823M1176 292.500h411M1176 604.500h411M1176 918.500h411"/>
          <path class="wl" d="M997 294h119M1007 294v310M998 604h118M1003 291l6 6M1003 601l6 6"/>
          <g class="ci">
            <circle cx="851" cy="293" r="12.500"/><circle cx="851" cy="605" r="12.500"/><circle cx="851" cy="918" r="12.500"/>
            <circle cx="1177" cy="178" r="12.500"/><circle cx="1422" cy="178" r="12.500"/>
            <circle cx="1600" cy="293" r="12.500"/><circle cx="1600" cy="605" r="12.500"/><circle cx="1600" cy="918" r="12.500"/>
            <circle cx="1177" cy="975" r="12.500"/><circle cx="1422" cy="975" r="12.500"/>
          </g>
          <g class="lb">
            <text x="851" y="298">E</text><text x="851" y="610">D</text><text x="851" y="923">C</text>
            <text x="1177" y="183" class="dm1">1</text><text x="1422" y="183">2</text>
            <text x="1600" y="298">E</text><text x="1600" y="610">D</text><text x="1600" y="923">C</text>
            <text x="1177" y="980" class="dm1">1</text><text x="1422" y="980" class="dm2">2</text>
          </g>
          <g class="dim">
            <text transform="translate(955 260) rotate(-90)">46040</text>
            <text transform="translate(1002 465) rotate(-90)">5938</text>
            <text transform="translate(1111 463) rotate(-90)">6000</text>
            <text transform="translate(1111 776) rotate(-90)">6000</text>
          </g>
          <g class="axs">
            <path d="M519 932v-42" stroke="#00c853" stroke-width="3"/><path d="M519 883l-4 9h8z" fill="#00c853"/>
            <path d="M519 932h42" stroke="#e02020" stroke-width="3"/><path d="M568 932l-9-4v8z" fill="#e02020"/>
            <circle cx="519" cy="932" r="3.500" fill="#1e6fe0"/>
            <text x="529" y="895" class="ay">Y</text><text x="556" y="921" class="ax">X</text><text x="504" y="937" class="az">Z</text>
          </g>
        </svg>
        <div class="tip">按鼠标左键选择需要设置长度标注<br>的第一点，按右键终止或Esc取消</div>
        <svg class="cad ov" viewBox="463 165 1150 823">
          <path class="blob" d="M1003 261l5 1 8 12 14 21 10 27 13 23 14 32 10 33 11 33 2 17 5 33-2 40-13 47-13 23-19 25-20 19-10 11-21 10-17 10-18 16-9-2-30-19-5-16-3-40-2-47-8-40v-70-93l7-30 8-27 8-17 17-21 13-8 15-2h30z"/>
        </svg>
      </div>

      <div class="bottom">
        <div class="tb bt1">
          <i class="grip"></i>
          <div class="cb cdis"><span>不偏移</span><i></i></div><i class="sep"></i>
          <span class="lbl">X=</span><span class="num n1">0</span><i class="spin"></i><span class="lbl">mm</span>
          <span class="lbl">Y=</span><span class="num n1">0</span><i class="spin"></i><span class="lbl">mm</span><i class="sep"></i>
          <i class="ck"></i><span class="rot">旋转</span><span class="num n2">0.000</span><i class="spin"></i><span class="lbl">°</span>
        </div>
        <div class="tb bt2">
          <i class="grip"></i>
          <span class="it"><svg class="ic"><use href="#ort"/></svg>正交</span>
          <span class="it"><svg class="ic"><use href="#ins"/></svg>交点</span>
          <span class="it on o1"><svg class="ic"><use href="#prp"/></svg>垂点</span>
          <span class="it on o2"><svg class="ic"><use href="#mid"/></svg>中点</span>
          <span class="it mn2"><svg class="ic"><use href="#vtx"/></svg>顶点</span>
          <span class="it mn2"><svg class="ic"><use href="#coo"/></svg>坐标</span>
        </div>
      </div>
    </section>

    <aside class="right">
      <div class="ptitle"><span class="m3">CAD</span><span>图层显示</span><span class="pin"></span><span class="cx"></span></div>
      <div class="rtree">
        <div class="rr"><i class="tw"></i><i class="ck"></i>已提取的<span class="m4">CAD</span>图层</div>
        <div class="rr"><i class="tw"></i><i class="ck"></i><span class="m4">CAD</span>原始图层</div>
        <div class="gadget"></div>
      </div>
    </aside>
  </main>

  <footer class="status">
    <span class="s1 m2">X=3409 Y=37707</span>
    <span class="s2">层高<span class="m">:5.33m</span></span>
    <span class="s3">建筑底标高<span class="m">:-5.43m</span></span>
    <span class="s4 m2">0</span>
    <span class="s5">按鼠标左键选择需要设置长度标注的第一点，按右键终止或<span class="m">Esc</span>取消</span>
    <span class="s6 m2">733.2FPS</span>
    <span class="s7"></span>
  </footer>

  <div class="task">
    <svg class="start" viewBox="0 0 16 16"><path d="M0 2l7-1v6.500H0zM8 1l8-1v7.500H8zM0 8.500h7V15l-7-1zM8 8.500h8V16l-8-1z" fill="#fff"/></svg>
    <div class="tk t1"><span class="tcad">CAD</span>CAD快速看图 - C:\...</div>
    <div class="tk t2"><svg class="fi"><use href="#tfolder"/></svg>土建算量zzz</div>
    <div class="tk t3"><svg class="fi"><use href="#tfolder"/></svg>钢筋算量zzz</div>
    <div class="tk t4"><svg class="fi"><use href="#tfolder"/></svg>图形算量</div>
    <div class="tk t5"><svg class="ti"><use href="#glodon"/></svg>广联达BIM土建算...</div>
    <div class="tk t6"><span class="pi"><b>PT</b><span>2018</span></span>PT2018 - [C:\User...</div>
    <div class="tk t6"><span class="pi"><b>PT</b><span>2018</span></span>PT2018 - [C:\User...</div>
    <div class="tray">
      <svg class="ty" viewBox="0 0 16 16"><path d="M13 3A7 7 0 1 0 14 11V7H8" fill="none" stroke="#1a8fe0" stroke-width="3"/></svg>
      <svg class="ty" viewBox="0 0 16 16"><circle cx="8" cy="8" r="7" fill="#3f77b8"/><circle cx="8" cy="8" r="4" fill="#a6c7e6"/></svg>
      <svg class="ty" viewBox="0 0 16 16"><ellipse cx="8" cy="10" rx="5" ry="6" fill="#222"/><ellipse cx="8" cy="11" rx="3" ry="4" fill="#fff"/><path d="M3 8h10l-1 3H4z" fill="#e83a9a"/><path d="M11 1l2 4-4-1z" fill="#e83a9a"/></svg>
      <svg class="ty" viewBox="0 0 16 16"><path d="M3 1h10v5H3z" fill="#c5c9ce"/><path d="M0 6h16v7H0z" fill="#8f959c"/><path d="M4 10h8v6H4z" fill="#e8e8e8"/></svg>
      <svg class="ty" viewBox="0 0 16 16"><path d="M8 0l7 3v5c0 4-4 7-7 8-3-1-7-4-7-8V3z" fill="#2b8ae6"/><path d="M4 6l4 5 4-5" stroke="#fff" stroke-width="2" fill="none"/></svg>
      <svg class="ty" viewBox="0 0 16 16"><circle cx="6" cy="7" r="6" fill="#46b03a"/><circle cx="12" cy="11" r="4" fill="#d8e8d2"/></svg>
      <svg class="ty" viewBox="0 0 16 16"><path d="M5 0h6v5H5zM4 5h8v9H4z" fill="none" stroke="#fff"/><path d="M7 2h1M9 2h1" stroke="#fff"/></svg>
      <svg class="ty" viewBox="0 0 16 16"><circle cx="7" cy="8" r="6" fill="none" stroke="#889"/><path d="M2 2l12 12" stroke="#ccd"/></svg>
      <svg class="ty" viewBox="0 0 16 16"><path d="M0 2h16v12H0z" fill="#5f7f3a"/><circle cx="8" cy="8" r="3" fill="#9ecb3c"/></svg>
      <svg class="ty" viewBox="0 0 16 16"><path d="M1 1h12v13H1z" fill="none" stroke="#fff"/><circle cx="12" cy="12" r="4" fill="#e02030"/></svg>
      <svg class="ty" viewBox="0 0 16 16"><path d="M2 15A13 13 0 0 1 15 2M5 15a10 10 0 0 1 10-10M8 15a7 7 0 0 1 7-7" fill="none" stroke="#ddd"/></svg>
      <svg class="ty" viewBox="0 0 16 16"><path d="M2 6h3l4-4v12l-4-4H2zM11 5c2 2 2 4 0 6" fill="none" stroke="#ddd"/></svg>
      <span class="tyt">英</span>
      <svg class="ty" viewBox="0 0 28 28"><use href="#sogou"/></svg>
      <div class="clock"><span>11:53:47</span><span>2020/6/24</span></div>
      <svg class="ty nt" viewBox="0 0 16 16"><path d="M1 1h14v11h-4l-3 3v-3H1z" fill="none" stroke="#eee"/></svg>
    </div>
  </div>
</div>
</body></html>
```

FILE: styles.css
```css
*{box-sizing:border-box}
html,body{margin:0;padding:0;background:#f0f0f0}
body{width:1920px;height:1068px;overflow:hidden;font:12px/16px "Noto Sans CJK SC","Liberation Sans",sans-serif;color:#1c1c1c}
.defs{position:absolute}
.app{position:relative;width:1920px;height:1068px;overflow:hidden;display:flex;flex-direction:column}
i{font-style:normal}
.m,.m2{font-family:"Liberation Mono",monospace;font-size:11px;letter-spacing:-.6px}
.ic{width:16px;height:16px;flex:none;display:block}
.ml2{margin-left:2px}
.ml6{margin-left:6px}

/* title & menu */
.titlebar{height:24px;background:#fff;display:flex;align-items:center;padding-left:2px;flex:none;position:relative}
.logo{width:16px;height:16px;margin-right:5px}
.ttl{font-size:12.360px;color:#222;white-space:nowrap}
.win{margin-left:auto;display:flex;align-items:center;gap:33px;padding-right:19px;margin-top:-2px}
.wmin{width:11px;height:1px;background:#111}
.wres{width:10px;height:10px;border:1px solid #111;box-shadow:2px -2px 0 -1px #fff,2px -2px 0 0 #111}
.wx{width:12px;height:12px}
.menubar{height:26px;background:#fff;display:flex;flex:none;align-items:stretch;justify-content:space-between}
.menus{display:flex;align-items:center;gap:10.500px;padding-left:13px;width:904px;border-right:1px solid #e4e4e4;border-bottom:1px solid #eee;white-space:nowrap;color:#222}
.nb{margin-left:-2px}
.login{width:166px;background:#f7f7f7;border:1px solid #eee;display:flex;align-items:center;gap:3px;padding-left:3px}
.login .grip{margin-right:5px}
.ch{margin-left:5px}
.ime{position:absolute;left:1510px;top:16px;width:207px;height:24px;background:#fff;border:1px solid #b8c3cc;border-left:0;display:flex;align-items:center;gap:7px;z-index:2}
.ime b{font-size:14px;color:#1f6fb8;font-weight:700}
.ime .dot{width:12px;font-family:"Liberation Sans"}
.sg{width:30px;height:30px;margin-top:-4px;flex:none;margin-right:-3px}
.ic2{width:15px;height:15px;flex:none}
.smile{margin-left:3px}

/* toolbars */
.tb{display:flex;align-items:center;gap:6px;white-space:nowrap}
.tb1{height:29px;flex:none;background:#fff;border-bottom:2px solid #e2e2e2;padding-left:3px;width:1920px}
.tb1 .ar{margin-right:-5px}
.gr3{margin:0 3px 0 2px}
.gr-2{margin-right:-2px}
.sig{width:12px;font-size:16px;text-align:center;font-family:"Liberation Serif";margin:0 2px 0 3px;color:#333}
.it{display:inline-flex;align-items:center;gap:4px;height:22px;flex:none}
.it.on{background:#cde4f7;box-shadow:0 0 0 1px #a8d0f0 inset;padding:0 3px;margin:0 -4px}
.it.dis{color:#a4a4a4}
.sep{width:1px;height:21px;background:#a8a8a8;flex:none}
.grip{width:2px;height:20px;flex:none;background:repeating-linear-gradient(#b8b8b8 0 2px,transparent 2px 4px)}
.ar{width:0;height:0;border:3.500px solid transparent;border-top:4px solid #222;border-bottom:0;flex:none;margin-left:-1px}
.ar.lt{border-top-color:#888}
.w2{width:18px}
.gap16{width:1px}
.cb{display:flex;height:22px;flex:none}
.cb span{flex:1;background:#fff;padding:2px 3px;overflow:hidden}
.cb i{width:14px;background:#d9d9d9;border:1px solid #c4c4c4;position:relative;flex:none}
.cb i:after{content:"";position:absolute;left:3px;top:6px;width:5px;height:5px;border:solid #777;border-width:0 1px 1px 0;transform:rotate(45deg)}
.cb-floor{width:80px}
.c43{width:58px;margin-left:4px}.c53{width:68px;margin-left:-3px}.c52{width:68px;margin-left:-3px}.c55{width:55px;margin-left:-4px}

/* work area */
.work{flex:none;height:938px;display:flex;background:#f0f0f0;position:relative}
.nav{width:156px;flex:none;display:flex;flex-direction:column;padding-top:2px}
.ptitle{height:15px;display:flex;align-items:center;border:1px solid #8a8a8a;border-radius:2px;background:#f0f0f0;font-size:12.500px;line-height:14px;padding-right:3px;flex:none}
.ptitle.act{background:#0a64e6;color:#fff;border:0;height:16px;border-radius:0;padding-right:4px}
.ptitle>span:first-child{margin-right:auto}
.pin{width:7px;height:9px;border:solid #222;border-width:1px 2px 0 1px;margin-right:11px;position:relative}
.pin:after{content:"";position:absolute;left:1px;top:6px;width:1px;height:4px;background:#222}
.cx{width:9px;height:9px;background:linear-gradient(45deg,transparent 46%,#444 46% 54%,transparent 54%),linear-gradient(-45deg,transparent 46%,#444 46% 54%,transparent 54%)}
.act .pin{border-color:#fff}.act .pin:after{background:#fff}
.act .cx{background:linear-gradient(45deg,transparent 46%,#fff 46% 54%,transparent 54%),linear-gradient(-45deg,transparent 46%,#fff 46% 54%,transparent 54%)}
.navbtn{height:22px;flex:none;background:#f0f0f0;border:1px solid #cdcdcd;border-top-color:#fff;margin-right:1px;text-align:center;line-height:20px}
.navtool{height:25px;flex:none;display:flex;align-items:center;gap:8px;padding-left:8px;background:#f7f7f7}
.pm{width:15px;height:15px;background:#e5eef7;border:1px solid #c6d3e0;color:#3c78b4;text-align:center;line-height:12px;font-weight:700;font-size:13px;font-family:"Liberation Sans"}
.tree{flex:1;background:#fff;border:1px solid #a0a0a0;margin:0 1px 0 3px;padding-top:4px;overflow:hidden}
.tr{height:16px;display:flex;align-items:center;white-space:nowrap;position:relative;padding-left:5px}
.tr>.ic{margin-right:4px}
.tw{width:10px;height:10px;flex:none;position:relative;margin-right:7px}
.tw:after{content:"";position:absolute;left:0;top:1px;width:5px;height:5px;border:solid #aaa;border-width:2px 2px 0 0;transform:rotate(45deg)}
.tw.o:after{left:2px;top:-1px;border-color:#555;transform:rotate(135deg)}
.tg{position:relative;margin-left:30px;border-left:1px dotted #888}
.tg:before{content:"";position:absolute;left:-20px;top:-8px;bottom:8px;border-left:1px dotted #999}
.tg .tr{padding-left:12px}
.tg .tr:before{content:"";position:absolute;left:0;top:8px;width:11px;border-top:1px dotted #888}
.tg .tr>.ic{margin-right:5px}
.hl .lab{background:#dcdcdc;margin-left:-5px;padding-left:5px;padding-right:3px}

.mid{width:306px;flex:none;padding:2px 3px 0 3px}
.panel{display:flex;flex-direction:column}
.ptool{height:28px;background:#fff;display:flex;align-items:center;gap:8px;padding-left:4px}
.search{height:25px;display:flex;align-items:stretch}
.sbox{width:275px;height:24px;background:#fff;border:1px solid #777;padding:3px;color:#999;font-size:12px}
.sic{margin:4px 0 0 6px;width:15px;height:15px}
.gridbox{display:flex;border:1px solid #9a9a9a;border-width:1px 2px 2px 1px;background:#fff;overflow:hidden}
.g1{height:209px}
.g2{height:266px;margin-top:3px}
.gt{flex:1;padding:2px 0 0 1px;overflow:hidden}
.gr{height:19px;display:flex;flex:none}
.n{width:26px;flex:none;background:#f2f2f2;text-align:center;font-family:"Liberation Serif";line-height:17px;border-bottom:1px solid #d0d0d0;font-size:12px}
.gh{height:22px}
.h{flex:1;background:linear-gradient(#fbe3bb,#f5bb62);text-align:center;line-height:22px;color:#8a1438;font-size:12px}
.v{flex:1;padding-left:20px;border-bottom:1px solid #c8c8c8;line-height:20px;background:#fff}
.big{font-size:12px}
.sel .n{background:#fbd08e;color:#a02020}
.sel .v{background:#d6e8f7}
.vs{width:17px;flex:none;background:#f0f0f0;position:relative;display:flex;flex-direction:column;align-items:center}
.up,.dn{height:17px;width:17px;position:relative;flex:none}
.up:after,.dn:after{content:"";position:absolute;left:5px;width:6px;height:6px;border:solid #666;border-width:2px 0 0 2px;transform:rotate(45deg);top:7px}
.dn:after{transform:rotate(225deg);top:2px}
.dn{margin-top:auto}
.th{width:16px;background:#cdcdcd;display:block}
.th1{height:83px}.th2{height:110px}

.p2{margin-top:5px}
.p3{margin-top:6px}
.pt{flex:1;padding:1px 0 0 1px;overflow:hidden}
.pr{display:grid;grid-template-columns:84px 64px 31px;height:21px;width:180px}
.ph{height:21px;background:#f5f5f5;width:180px;line-height:20px;font-size:12.500px}
.ph>span{padding-left:3px;border-bottom:1px solid #ccc}
.ph .pv{background:linear-gradient(#fde9c8,#f5bb62);color:#8a1438}
.pr>span{border-bottom:1px solid #c8c8c8;border-right:1px solid #dcdcdc;white-space:nowrap;overflow:hidden;line-height:20px}
.pn{padding-left:21px}
.pn.b{color:#1c1cc0}
.pval{padding-left:2px}
.pval.s{background:#d6e8f7;line-height:15px}
.pc{display:flex;align-items:center;padding-left:4px}
.ck{display:block;width:13px;height:13px;border:1px solid #333;background:#fff;flex:none}

.tabs{display:flex;margin-top:2px;height:21px;padding-left:1px}
.tab{padding:0 6px;line-height:20px;background:#f0f0f0;border:1px solid #d8d8d8;margin-top:1px;margin-left:1px}
.tab.on{background:#fff;border:0;margin-top:0;padding:0 8px;height:21px;width:87px;white-space:nowrap}
.tabbody{border:1px solid #a8a8a8;border-width:2px 1px 1px 1px;background:#f0f0f0;margin:0 4px 0 4px;height:322px;padding:2px 1px 0 1px;margin-top:-1px}
.btns{display:flex;height:25px;align-items:stretch;position:relative}
.bt{width:57px;background:#ececec;border:1px solid #cfcfcf;text-align:center;line-height:23px;border-bottom-width:2px;flex:none;white-space:nowrap}
.bt.w1{width:57px}
.bt.dd{width:8px;position:relative}
.bt.dd .ar{position:absolute;left:0;top:9px;margin:0}
.more{position:absolute;right:0;top:0;width:11px;height:23px;border:1px solid #bbb;line-height:12px;text-align:center;font-size:11px;background:#f3f3f3}
.dt{background:#fff;height:290px;margin-top:1px;border:1px solid #a8a8a8;position:relative;padding:1px 0 0 1px}
.dr{display:flex;height:19px}
.dh{height:25px;background:#f2f2f2}
.dr .n{width:21px;line-height:18px}
.dh .n{background:#f2f2f2}
.dh .h{width:239px;flex:none;line-height:25px;height:25px}
.d{width:239px;flex:none;border:solid #ccc;border-width:0 1px 1px 0;white-space:nowrap;overflow:hidden;display:flex;align-items:center;padding-left:3px;position:relative;background:#fff}
.r{width:28px;flex:none;padding-left:3px;border-bottom:1px solid #d0d0d0;line-height:18px}
.dh .r{line-height:25px;font-size:12px;font-family:inherit;border:0}
.y .d,.y .r{background:#ff0;border-color:#d8d800}
.ind{margin-left:13px}
.mn{width:12px;height:12px;border:1px solid #aaa;margin-right:5px;position:relative;flex:none}
.mn:after{content:"";position:absolute;left:2px;top:4px;width:6px;height:1px;background:#333}
.sub{padding-left:30px}
.br{position:absolute;left:8px;top:-6px;width:17px;height:14px;border:solid #a8a800;border-width:0 0 1px 1px}
.cur .n{background:#fbd08e;color:#b02020}
.edit{outline:2px solid #000;outline-offset:-2px;padding-left:3px;background:#ff6}
.hs{position:absolute;left:0;right:0;bottom:0;height:17px;background:#f0f0f0;display:flex;align-items:center}
.hs b{width:17px;height:15px;background:#cdcdcd;margin-left:3px}
.hl-l,.hl-r{width:16px;height:16px;position:relative}
.hl-l:after,.hl-r:after{content:"";position:absolute;left:6px;top:5px;width:5px;height:5px;border:solid #666;border-width:2px 0 0 2px;transform:rotate(-45deg)}
.hl-r{margin-left:auto}
.hl-r:after{transform:rotate(135deg);left:2px}

.center{width:1154px;flex:none;padding:1px 0 0 1px;display:flex;flex-direction:column}
.rowa,.rowb,.tc1,.tc2,.bt1,.bt2{background:#f5f5f5;flex:none}
.rowa{height:27px;width:824px;padding-left:12px;border-bottom:1px solid #e8e8e8}
.rowa .ar{margin-right:0}
.rowb{height:28px;width:829px;padding-left:6px;border-bottom:1px solid #e8e8e8;gap:7px}
.rowc{display:flex;gap:11px;height:30px;flex:none}
.tc1{width:796px;padding-left:10px;height:29px}
.tc2{width:130px;padding-left:3px;height:29px;gap:5px}
.canvas{width:1150px;height:823px;background:#000;flex:none;position:relative}
.cad{display:block;width:1150px;height:823px}
.cad.ov{position:absolute;left:0;top:0}
.gy{fill:#a0a0a0}.wh{fill:#fff}.yl{fill:#ff0}.bl{fill:#0a18c8}
.blw{stroke:#fff;fill:none}
.tan{fill:#d9a860}
.gl{stroke:#0a7d0a;fill:none}
.rd{stroke:#d80a0a;fill:none}
.wl{stroke:#fff;fill:none}
.ci circle{fill:none;stroke:#0a7d0a}
.lb text{fill:#d8d8d8;font:16px "Liberation Sans";text-anchor:middle}
.lb .dm1{fill:#c88}
.lb .dm2{fill:#999}
.dim text{fill:#bdbdbd;font:15px "Liberation Sans"}
.blob{fill:none;stroke:#f63c3c;stroke-width:7;stroke-linejoin:round}
.axs text{font:13px "Liberation Sans"}
.ay{fill:#00c853}.ax{fill:#e02020}.az{fill:#1e6fe0}
.tip{position:absolute;left:467px;top:335px;width:189px;height:32px;background:rgba(26,26,112,.92);border:1px solid #3a4a90;color:#8f93c4;font-size:12px;line-height:13px;padding:2px 3px;white-space:nowrap}
.bottom{display:flex;height:28px;flex:none;gap:65px;padding-top:1px}
.bt1{width:412px;padding-left:3px;gap:4px;height:27px}
.bt2{width:314px;padding-left:3px;height:27px;gap:6px}
.cdis{width:60px}
.cdis span{background:#f5f5f5;color:#777}
.cdis i{background:#c8c8c8}
.lbl{flex:none;color:#444}
.num{flex:none;background:#fff;text-align:right;height:22px;line-height:22px;padding-right:3px;color:#888;font-family:"Liberation Sans";font-size:13px}
.n1{width:42px}.n2{width:53px}
.spin{width:11px;height:22px;flex:none;background:#ececec;border:1px solid #ddd;margin-left:-4px;position:relative}
.spin:after{content:"";position:absolute;left:2px;top:2px;width:0;border:3px solid transparent;border-bottom:4px solid #666;border-top:0}
.spin:before{content:"";position:absolute;left:2px;top:12px;width:0;border:3px solid transparent;border-top:4px solid #666;border-bottom:0}
.rot{margin:0 2px 0 4px;width:24px}
.bt2 .it.on{width:51px;margin:0;padding:0 0 0 4px;gap:3px}
.bt2 .it.o1{margin-left:-2px}
.bt2 .it.o2{margin-left:-6px;padding-left:7px}
.mn2{margin-left:-2px}

.right{width:303px;flex:none;padding:2px 1px 0 0;display:flex;flex-direction:column}
.m3{font:11px "Liberation Mono";letter-spacing:-.6px;margin:0!important}
.right .ptitle span:nth-child(2){margin-right:auto}
.rtree{margin-top:2px;height:918px;background:#fff;border:1px solid #999;border-bottom:2px solid #999;position:relative;padding:0 0 0 9px}
.rr{height:16px;display:flex;align-items:center;font-size:12.500px;white-space:nowrap}
.rr .tw{margin-right:5px}
.rr .ck{margin-right:3px}
.m4{font:11px "Liberation Sans"}
.gadget{position:absolute;right:0;top:3px;width:9px;height:58px;border-radius:3px 0 0 3px;background:linear-gradient(#4a5564 0 50%,#5d9a8a 50% 90%,#4a5564 90%)}

.status{height:23px;flex:none;background:#f0f0f0;border-top:1px solid #d8d8d8;display:flex;align-items:center;position:relative;white-space:nowrap}
.status>span{height:22px;line-height:22px;border-right:1px solid #dcdcdc;flex:none}
.s1{width:146px;padding-left:1px}
.s2{width:83px;padding-left:4px}
.s3{width:127px;padding-left:1px}
.s4{width:54px;padding-left:4px}
.s5{width:1289px;text-align:center;padding-right:432px}
.s6{width:71px;padding-left:1px;border-left:1px solid #dcdcdc}
.s7{flex:1;border:0!important}

.task{height:40px;flex:none;background:#0c131c;display:flex;color:#e6e6e6;position:relative;align-items:flex-start;font-size:12.500px;white-space:nowrap}
.start{width:16px;height:16px;margin:12px 0 0 16px;flex:none}
.tk{display:flex;align-items:center;height:40px;gap:9px;flex:none}
.t1{width:164px;margin-left:29px;gap:4px}
.tcad{width:24px;height:24px;background:#2a72c0;color:#dff;font-size:9px;line-height:24px;text-align:center;flex:none}
.fi{width:16px;height:24px;flex:none}
.t2{width:160px}.t3{width:157px}.t4{width:151px}
.t5{width:160px;background:#2c3138;padding-left:10px;gap:4px}
.ti{width:24px;height:24px;flex:none}
.t6{width:161px;padding-left:11px;gap:5px}
.pi{width:23px;height:28px;flex:none;background:#d8322a;border-radius:3px;display:flex;flex-direction:column;align-items:center;color:#fff;margin-top:4px;overflow:hidden}
.pi b{font:italic 700 12px/14px "Liberation Sans"}
.pi span{font:7px/10px "Liberation Sans";background:#fff;color:#c22;width:19px;text-align:center}
.tray{position:absolute;left:1452px;top:0;width:468px;height:40px;display:flex;align-items:flex-start;gap:6.600px;padding-top:5px}
.ty{width:17px;height:17px;flex:none;margin-top:7px}
.tyt{font-size:14px;width:16px;margin:6px 6px 0 1px}
.clock{display:flex;flex-direction:column;align-items:center;width:56px;margin-left:16px;line-height:20px;margin-top:-5px}
.nt{margin-left:18px}
```
